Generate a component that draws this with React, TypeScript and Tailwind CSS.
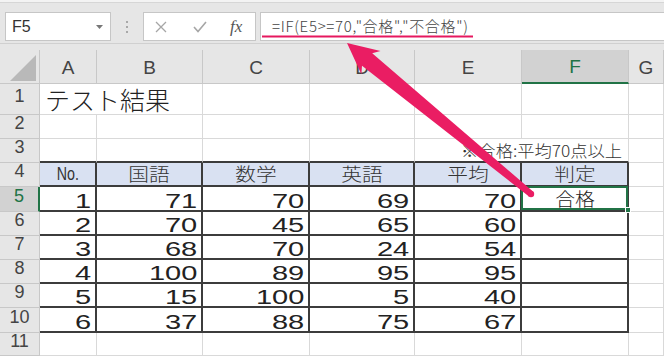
import React from "react";

const data: (number | string)[][] = [
  [1, 71, 70, 69, 70, "合格"],
  [2, 70, 45, 65, 60, ""],
  [3, 68, 70, 24, 54, ""],
  [4, 100, 89, 95, 95, ""],
  [5, 15, 100, 5, 40, ""],
  [6, 37, 88, 75, 67, ""],
];

const LIGHT = "border-r border-b border-[#d9d9d9]";
const DARK = "border-r-2 border-b-2 border-[#3c3c3c]";
const ROW3 = "border-r border-b-2 border-r-[#d9d9d9] border-b-[#3c3c3c]";

function RowHead({ n, active }: { n: number; active?: boolean }) {
  return (
    <div
      className={
        active
          ? "flex justify-center items-center pb-[7px] bg-[#d2d2d2] border-b border-b-[#c8c8c8] border-r-2 border-r-[#217346] text-[#217346] text-[18px] leading-[18px]"
          : "flex justify-center items-center pb-[7px] bg-[#e6e6e6] border-b border-r border-[#c8c8c8] text-[#444] text-[18px] leading-[18px]"
      }
    >
      {n}
    </div>
  );
}

function Num({ v }: { v: number | string }) {
  return (
    <div className={DARK + " flex items-center justify-end pr-[4px] pt-[4px]"}>
      <span className="inline-block origin-right scale-x-[1.45] text-[20px] leading-[20px] text-[#222] font-['Liberation_Sans',sans-serif]">
        {v}
      </span>
    </div>
  );
}

function TH({ t }: { t: string }) {
  return (
    <div className={DARK + " bg-[#d9e1f2] flex items-center justify-center pb-[2px]"}>
      <span className="inline-block scale-x-[1.15] text-[18px] leading-[18px] font-light text-[#333] font-['Noto_Sans_CJK_JP',sans-serif]">
        {t}
      </span>
    </div>
  );
}

export default function App() {
  const tip = [347, 43];
  const tail = [531, 194];
  const dx = tail[0] - tip[0];
  const dy = tail[1] - tip[1];
  const len = Math.hypot(dx, dy);
  const u = [dx / len, dy / len];
  const n = [-u[1], u[0]];
  const L = 31;
  const W = 15;
  const w1 = 8;
  const w2 = 3.2;
  const p = (a: number, b: number) => [tip[0] + a * u[0] + b * n[0], tip[1] + a * u[1] + b * n[1]];
  const pts = [tip, p(L, W), p(L - 5, w1), p(len, w2), p(len, -w2), p(L - 5, -w1), p(L, -W)]
    .map((q) => q[0].toFixed(1) + "," + q[1].toFixed(1))
    .join(" ");

  const cols = ["A", "B", "C", "D", "E", "F", "G"];

  return (
    <div className="relative w-[664px] h-[356px] overflow-hidden bg-white font-['Liberation_Sans','Noto_Sans_CJK_JP',sans-serif]">
      {/* formula bar */}
      <div className="h-[3px] bg-[#f3f3f3] border-b border-[#d6d6d6]" />
      <div className="h-[41px] bg-[#e6e6e6] border-b border-[#d0d0d0] flex items-start pt-[9px] pl-[5px]">
        <div className="w-[106px] h-[29px] bg-white border border-[#c6c6c6] flex items-center justify-between pl-[6px] pr-[7px]">
          <span className="text-[16px] text-[#333]">F5</span>
          <svg width="7" height="4" viewBox="0 0 7 4">
            <path d="M0 0 L7 0 L3.5 4 Z" fill="#777" />
          </svg>
        </div>
        <div className="w-[32px] h-[29px] flex flex-col items-center justify-center gap-[3px]">
          <div className="w-[2px] h-[2px] bg-[#a8a8a8]" />
          <div className="w-[2px] h-[2px] bg-[#a8a8a8]" />
          <div className="w-[2px] h-[2px] bg-[#a8a8a8]" />
        </div>
        <div className="w-[113px] h-[29px] bg-white border border-[#c6c6c6] flex items-center">
          <svg className="ml-[11px]" width="12" height="12" viewBox="0 0 12 12">
            <path d="M1 1 L11 11 M11 1 L1 11" stroke="#a6a6a6" strokeWidth="1.3" fill="none" />
          </svg>
          <svg className="ml-[26px]" width="14" height="12" viewBox="0 0 14 12">
            <path d="M1 6 L5 10.5 L13 1" stroke="#a6a6a6" strokeWidth="1.6" fill="none" />
          </svg>
          <span className="ml-[23px] italic text-[17px] leading-[17px] text-[#555] font-['Liberation_Serif',serif]">
            fx
          </span>
        </div>
        <div className="ml-[4px] flex-1 h-[29px] bg-white border border-r-0 border-[#c6c6c6] flex items-center pl-[11px]">
          <span className="text-[15px] tracking-[0.7px] font-light text-[#444] font-['Noto_Sans_CJK_JP',sans-serif]">
            =IF(E5&gt;=70,"合格","不合格")
          </span>
        </div>
      </div>
      <div className="h-[6px] bg-[#e6e6e6]" />

      {/* column headers */}
      <div className="grid grid-cols-[40px_57px_106px_107px_105px_107px_107px_1fr] h-[34px] bg-[#e6e6e6]">
        <div className="border-r border-b border-[#c8c8c8] relative">
          <svg className="absolute left-0 top-0" width="40" height="33" viewBox="0 0 40 33">
            <path d="M10 31 L36 31 L36 5 Z" fill="#b9b9b9" />
          </svg>
        </div>
        {cols.map((c) =>
          c === "F" ? (
            <div
              key={c}
              className="flex items-center justify-center pt-[3px] bg-[#d2d2d2] border-r border-r-[#c8c8c8] border-b-2 border-b-[#217346] text-[19px] text-[#217346]"
            >
              {c}
            </div>
          ) : (
            <div
              key={c}
              className="flex items-center justify-center pt-[3px] border-r border-b border-[#c8c8c8] text-[19px] text-[#444]"
            >
              {c}
            </div>
          )
        )}
      </div>

      {/* sheet body */}
      <div className="grid grid-cols-[40px_57px_106px_107px_105px_107px_107px_1fr] grid-rows-[31px_24px_24px_24px_25px_24px_24px_24px_24px_25px_23px]">
        {/* row 1 */}
        <RowHead n={1} />
        <div className="border-b border-b-[#d9d9d9] flex items-center pl-[5px] whitespace-nowrap">
          <span className="text-[25px] leading-[25px] font-light text-[#222] font-['Noto_Sans_CJK_JP',sans-serif]">
            テスト結果
          </span>
        </div>
        <div className={LIGHT} />
        <div className={LIGHT} />
        <div className={LIGHT} />
        <div className={LIGHT} />
        <div className={LIGHT} />
        <div className={LIGHT} />

        {/* row 2 */}
        <RowHead n={2} />
        <div className={LIGHT} />
        <div className={LIGHT} />
        <div className={LIGHT} />
        <div className={LIGHT} />
        <div className={LIGHT} />
        <div className={LIGHT} />
        <div className={LIGHT} />

        {/* row 3 */}
        <RowHead n={3} />
        <div className={ROW3} />
        <div className={ROW3} />
        <div className={ROW3} />
        <div className={ROW3} />
        <div className="border-b-2 border-b-[#3c3c3c]" />
        <div className={ROW3 + " flex items-center justify-end pr-[6px] whitespace-nowrap"}>
          <span className="inline-block origin-right scale-x-[1.08] text-[16px] leading-[16px] font-light text-[#333] font-['Noto_Sans_CJK_JP',sans-serif]">
            ※合格:平均70点以上
          </span>
        </div>
        <div className={LIGHT} />

        {/* row 4 headers */}
        <RowHead n={4} />
        <div className={DARK + " bg-[#d9e1f2] flex items-center justify-center pb-[2px]"}>
          <span className="inline-block scale-x-[0.75] text-[19px] leading-[19px] text-[#333]">No.</span>
        </div>
        <TH t="国語" />
        <TH t="数学" />
        <TH t="英語" />
        <TH t="平均" />
        <TH t="判定" />
        <div className={LIGHT} />

        {/* data rows */}
        {data.map((r, i) => (
          <React.Fragment key={i}>
            <RowHead n={i + 5} active={i === 0} />
            <Num v={r[0]} />
            <Num v={r[1]} />
            <Num v={r[2]} />
            <Num v={r[3]} />
            <Num v={r[4]} />
            {i === 0 ? (
              <div className={DARK + " relative flex items-center justify-center pb-[1px]"}>
                <span className="inline-block scale-x-[1.1] text-[18px] leading-[18px] font-light text-[#222] font-['Noto_Sans_CJK_JP',sans-serif]">
                  {r[5]}
                </span>
                <div className="absolute -left-[1px] -top-[1px] -right-[1px] bottom-0 border-2 border-[#217346]" />
                <div className="absolute -right-[4px] -bottom-[3px] w-[6px] h-[6px] bg-[#217346] border border-white" />
              </div>
            ) : (
              <div className={DARK} />
            )}
            <div className={LIGHT} />
          </React.Fragment>
        ))}

        {/* row 11 */}
        <RowHead n={11} />
        <div className={LIGHT} />
        <div className={LIGHT} />
        <div className={LIGHT} />
        <div className={LIGHT} />
        <div className={LIGHT} />
        <div className={LIGHT} />
        <div className={LIGHT} />
      </div>

      {/* annotations */}
      <svg className="absolute left-0 top-0 pointer-events-none" width="664" height="356" viewBox="0 0 664 356">
        <line x1="262" y1="36.5" x2="473" y2="36.5" stroke="#e6185f" strokeWidth="2" />
        <polygon points={pts} fill="#ea1d63" strokeLinejoin="round" />
        <circle cx={tail[0]} cy={tail[1]} r={w2} fill="#ea1d63" />
      </svg>
    </div>
  );
}
